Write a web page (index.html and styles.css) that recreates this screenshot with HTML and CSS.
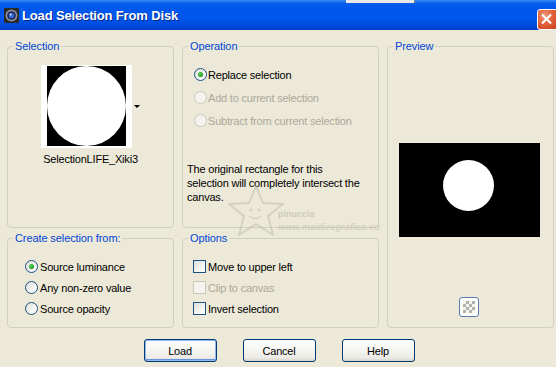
FILE: index.html
```html
<!DOCTYPE html>
<html>
<head>
<meta charset="utf-8">
<link rel="stylesheet" href="styles.css">
</head>
<body>
<div class="window">
  <div class="topclip"></div>
  <header class="titlebar">
    <svg class="appicon" width="15" height="15" viewBox="0 0 15 15">
      <rect x="0" y="0" width="15" height="15" rx="1" fill="#2a2a2a"/>
      <circle cx="7.5" cy="7.5" r="6" fill="#8a8f99"/>
      <circle cx="7.5" cy="7.5" r="4.3" fill="#1b2a66"/>
      <circle cx="7.5" cy="7.5" r="2.6" fill="#3b6fd8"/>
      <circle cx="6.6" cy="6.6" r="1" fill="#cfe0ff"/>
    </svg>
    <span class="title">Load Selection From Disk</span>
    <span class="close">
      <svg width="21" height="21" viewBox="0 0 21 21">
        <path d="M6 6 L14 14 M14 6 L6 14" stroke="#fff" stroke-width="2.2" stroke-linecap="square"/>
      </svg>
    </span>
  </header>
  <main class="content">
    <div class="groups">
      <fieldset class="group g-selection">
        <legend>Selection</legend>
        <div class="thumbwrap">
          <div class="thumb"><div class="thumb-black"><div class="thumb-circle"></div></div></div>
          <span class="dd-arrow"></span>
        </div>
        <div class="caption">SelectionLIFE_Xiki3</div>
      </fieldset>

      <fieldset class="group g-operation">
        <legend>Operation</legend>
        <div class="op-list">
          <div class="row"><span class="radio checked"></span><span>Replace selection</span></div>
          <div class="row disabled"><span class="radio"></span><span>Add to current selection</span></div>
          <div class="row disabled"><span class="radio"></span><span>Subtract from current selection</span></div>
        </div>
        <p class="desc">The original rectangle for this selection will completely intersect the canvas.</p>
      </fieldset>

      <fieldset class="group g-preview">
        <legend>Preview</legend>
        <div class="preview"><div class="preview-circle"></div></div>
        <div class="checker-btn"><div class="checker"></div></div>
      </fieldset>

      <fieldset class="group g-create">
        <legend>Create selection from:</legend>
        <div class="list">
          <div class="row"><span class="radio checked"></span><span>Source luminance</span></div>
          <div class="row"><span class="radio"></span><span>Any non-zero value</span></div>
          <div class="row"><span class="radio"></span><span>Source opacity</span></div>
        </div>
      </fieldset>

      <fieldset class="group g-options">
        <legend>Options</legend>
        <div class="list opts">
          <div class="row"><span class="check"></span><span>Move to upper left</span></div>
          <div class="row disabled"><span class="check"></span><span>Clip to canvas</span></div>
          <div class="row"><span class="check"></span><span>Invert selection</span></div>
        </div>
      </fieldset>
    </div>

    <div class="buttons">
      <button class="btn default">Load</button>
      <button class="btn">Cancel</button>
      <button class="btn">Help</button>
    </div>
  </main>

  <div class="watermark">
    <svg class="wm-star" width="62" height="56" viewBox="0 0 62 56">
      <path d="M30 3 L37 20 L57 21 L42 33 L47 52 L30 41 L13 52 L18 33 L3 21 L23 20 Z" fill="none" stroke="#b9b6a8" stroke-width="2" stroke-linejoin="round"/>
      <circle cx="25" cy="27" r="1.6" fill="#bdbaac"/>
      <circle cx="33" cy="27" r="1.6" fill="#bdbaac"/>
      <path d="M23 33 Q29 38 35 33" fill="none" stroke="#bdbaac" stroke-width="1.5"/>
    </svg>
    <span class="wm-name">pinuccia</span>
    <span class="wm-url">www.maidiregrafica.eu</span>
  </div>
</div>
</body>
</html>
```

FILE: styles.css
```css
* { box-sizing: border-box; }

html, body {
  margin: 0;
  padding: 0;
  background: #ece9d8;
}

body {
  font-family: "Liberation Sans", Arial, sans-serif;
  font-size: 11px;
  color: #000;
}

.window {
  position: relative;
  width: 556px;
  height: 367px;
  background: #ece9d8;
  overflow: hidden;
}

.topclip {
  position: absolute;
  left: 346px;
  top: 0;
  width: 69px;
  height: 3px;
  background: #e8e8e8;
  border-right: 1px solid #7d7d7d;
  z-index: 3;
}

.titlebar {
  height: 30px;
  display: flex;
  align-items: center;
  background: linear-gradient(to bottom, #3a8cf7 0px, #0a5fe8 3px, #0058ee 6px, #0056ec 18px, #004bdf 25px, #003fc8 30px);
  position: relative;
}

.appicon {
  margin-left: 4px;
  margin-top: 1px;
  flex: none;
}

.title {
  margin-left: 3px;
  margin-top: 1px;
  color: #fff;
  font-weight: bold;
  font-size: 13px;
  letter-spacing: -0.15px;
  text-shadow: 1px 1px 0 #0a2a8a;
}

.close {
  position: absolute;
  left: 537px;
  top: 9px;
  width: 21px;
  height: 21px;
  border: 1px solid #fff;
  border-radius: 3px;
  background: radial-gradient(circle at 35% 30%, #f09a7a 0%, #e2603a 45%, #c8421c 100%);
  display: flex;
  align-items: center;
  justify-content: center;
}

.close svg { display: block; margin-left: -1px; margin-top: -1px; }

.content {
  padding: 9px 0 0 7px;
}

.groups {
  display: grid;
  grid-template-columns: 167px 197px 167px;
  grid-template-rows: 189px 97px;
  column-gap: 8px;
  row-gap: 3px;
}

.group {
  margin: 0;
  padding: 0;
  border: 1px solid #d0d0bf;
  border-radius: 4px;
  min-width: 0;
}

.group legend {
  margin-left: 5px;
  padding: 0 2px;
  line-height: 14px;
  color: #0046d5;
  letter-spacing: -0.1px;
}

.g-selection { grid-column: 1; grid-row: 1; }
.g-operation { grid-column: 2; grid-row: 1; }
.g-preview { grid-column: 3; grid-row: 1 / span 2; }
.g-create { grid-column: 1; grid-row: 2; }
.g-options { grid-column: 2; grid-row: 2; }

/* Selection */
.thumbwrap {
  display: flex;
  align-items: center;
  margin: 12px 0 0 33px;
}

.thumb {
  width: 91px;
  height: 83px;
  background: #fff;
  padding: 1px 6px 0 6px;
}

.thumb-black {
  width: 79px;
  height: 80px;
  background: #000;
}

.thumb-circle {
  width: 79px;
  height: 80px;
  border-radius: 50%;
  background: #fff;
}

.dd-arrow {
  margin-left: 2px;
  width: 0;
  height: 0;
  border-left: 3px solid transparent;
  border-right: 3px solid transparent;
  border-top: 3px solid #000;
}

.caption {
  margin-top: 5px;
  text-align: center;
  line-height: 13px;
  letter-spacing: -0.2px;
}

/* Rows */
.row {
  display: flex;
  align-items: center;
  gap: 2px;
  letter-spacing: -0.2px;
  white-space: nowrap;
}

.row.disabled { color: #aca899; }

.op-list {
  margin: 10px 0 0 11px;
}

.op-list .row { height: 23px; gap: 1px; }

.list {
  margin: 11px 0 0 17px;
}

.list .row { height: 21px; }

.list.opts { margin-left: 10px; }
.list.opts .row { gap: 2px; }

.radio {
  width: 13px;
  height: 13px;
  flex: none;
  border-radius: 50%;
  border: 1px solid #1c5180;
  background: linear-gradient(135deg, #dcdcd7 0%, #f6f6f4 60%, #ffffff 100%);
  position: relative;
}

.radio.checked::after {
  content: "";
  position: absolute;
  left: 3px;
  top: 3px;
  width: 5px;
  height: 5px;
  border-radius: 50%;
  background: radial-gradient(circle at 40% 40%, #5fd35f 0%, #21a121 60%, #1a8a1a 100%);
}

.row.disabled .radio {
  border-color: #cac8bb;
  background: #f4f3ee;
}

.check {
  width: 13px;
  height: 13px;
  flex: none;
  border: 1px solid #1c5180;
  background: linear-gradient(135deg, #dcdcd7 0%, #f4f4f2 60%, #ffffff 100%);
}

.row.disabled .check {
  border-color: #cac8bb;
  background: #f4f3ee;
}

.desc {
  margin: 30px 0 0 4px;
  width: 176px;
  line-height: 14px;
  letter-spacing: -0.2px;
}

/* Preview */
.preview {
  margin: 90px 0 0 11px;
  width: 141px;
  height: 94px;
  background: #000;
  display: flex;
  align-items: flex-start;
}

.preview-circle {
  margin: 17px 0 0 44px;
  width: 51px;
  height: 51px;
  border-radius: 50%;
  background: #fff;
}

.checker-btn {
  margin: 60px 0 0 71px;
  width: 20px;
  height: 20px;
  border: 1px solid #5a7ab0;
  border-radius: 3px;
  background: #fff;
  padding: 3px;
}

.checker {
  width: 12px;
  height: 12px;
  background-color: #f3f3f3;
  background-image:
    linear-gradient(45deg, #b3b3ad 25%, transparent 25%, transparent 75%, #b3b3ad 75%),
    linear-gradient(45deg, #b3b3ad 25%, transparent 25%, transparent 75%, #b3b3ad 75%);
  background-size: 6px 6px;
  background-position: 0 0, 3px 3px;
}

/* Buttons */
.buttons {
  display: flex;
  justify-content: center;
  gap: 26px;
  margin-top: 11px;
  padding-right: 5px;
}

.btn {
  width: 73px;
  height: 23px;
  padding: 0;
  font-family: "Liberation Sans", Arial, sans-serif;
  font-size: 11px;
  letter-spacing: -0.2px;
  color: #000;
  border: 1px solid #003c74;
  border-radius: 3px;
  background: linear-gradient(to bottom, #ffffff 0%, #f6f6f3 40%, #ecebe6 85%, #d6d0c5 100%);
}

.btn.default {
  box-shadow: inset 0 0 0 1px #97b7ef, inset 0 -1px 0 1px #6a93df;
}

/* Watermark */
.watermark {
  position: absolute;
  left: 226px;
  top: 183px;
  width: 160px;
  height: 60px;
  pointer-events: none;
  opacity: 0.45;
}

.wm-star {
  position: absolute;
  left: 0;
  top: 0;
}

.wm-name {
  position: absolute;
  left: 52px;
  top: 26px;
  font-size: 9px;
  font-weight: bold;
  color: #a8a698;
}

.wm-url {
  position: absolute;
  left: 52px;
  top: 39px;
  font-size: 9px;
  font-weight: bold;
  font-style: italic;
  color: #b8b6a8;
  letter-spacing: 0.2px;
}
```
